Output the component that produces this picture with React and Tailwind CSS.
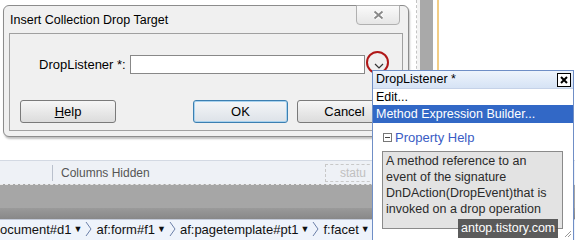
const crumbs = ["ocument#d1", "af:form#f1", "af:pagetemplate#pt1", "f:facet "];

const Chevron = () => (
  <svg width="8" height="16" viewBox="0 0 8 16" className="mx-[3px] shrink-0">
    <path d="M1 1 L6 8 L1 15" fill="none" stroke="#6b7fa8" strokeWidth="1" />
  </svg>
);

const App = () => {
  return (
    <div
      className="relative w-[575px] h-[240px] overflow-hidden bg-white text-[13px] text-black"
      style={{ fontFamily: '"Liberation Sans", Arial, sans-serif' }}
    >
      {/* editor behind the dialog */}
      <div className="flex flex-col h-full">
        <div className="flex h-[163px]">
          <div className="w-[417px] bg-white border-r border-dashed border-[#c4c4c4]" />
          <div className="w-[3px] bg-[#f4f4f4]" />
          <div className="w-[13px] bg-[#a9a9a9]" />
          <div className="w-[4px] bg-white" />
          <div className="w-[2px] bg-[#f2cd85]" />
          <div className="flex-1 bg-white" />
        </div>
        <div className="flex items-center h-[24px] bg-[#eef1f6] border-t border-[#d3d9e3]">
          <div className="w-[52px]" />
          <div className="w-px h-[16px] bg-[#b9c0cc]" />
          <span className="ml-[8px] text-[12px] text-[#555]">Columns Hidden</span>
          <div className="ml-auto mr-[200px] w-[50px] h-[18px] border border-dashed border-[#c8c8c8] text-[12px] text-[#c0c0c0] pl-[14px] leading-[16px]">
            statu
          </div>
        </div>
        <div className="h-[24px] bg-[#a6a6a6] border-t border-dashed border-[#e8e8e8]" />
        <div className="h-[11px] bg-gradient-to-b from-[#9a9a9a] to-[#888]" />
        <div className="flex-1 flex items-end pb-px bg-[#eef3fb] border-t border-[#c3cad8] text-[13px] text-[#111] whitespace-nowrap">
          {crumbs.map((c) => (
            <div key={c} className="flex items-center">
              <span>{c}</span>
              <span className="text-[9px] ml-[2px]">▼</span>
              <Chevron />
            </div>
          ))}
        </div>
      </div>

      {/* dialog */}
      <div className="absolute left-[3px] top-[5px] w-[406px] h-[132px] bg-[#f0f0f0] border border-[#8c8c8c] rounded-[6px] shadow-[1px_2px_2px_rgba(0,0,0,0.25)] flex flex-col">
        <div className="flex items-start h-[27px]">
          <span className="ml-[6px] mt-[5px] text-[12.5px]">Insert Collection Drop Target</span>
          <div className="ml-auto mr-[8px] -mt-px w-[44px] h-[20px] rounded-b-[4px] border border-[#b0b0b0] bg-gradient-to-b from-[#fafafa] to-[#e6e6e6] flex items-center justify-center">
            <svg width="11" height="10" viewBox="0 0 11 10">
              <path d="M1.5 1.5 L9.5 8.5 M9.5 1.5 L1.5 8.5" stroke="#fff" strokeWidth="4" />
              <path d="M1.5 1.5 L9.5 8.5 M9.5 1.5 L1.5 8.5" stroke="#8a8a8a" strokeWidth="2" />
            </svg>
          </div>
        </div>
        <div className="mx-[5px] h-[98px] border border-[#a0a0a0] bg-[#f0f0f0] flex flex-col">
          <div className="flex items-center mt-[21px] h-[19px]">
            <span className="ml-[29px] w-[91px]">DropListener *:</span>
            <div className="w-[235px] h-[19px] bg-white border border-[#888]" />
            <svg width="12" height="8" viewBox="0 0 12 8" className="ml-[8px] mt-[2px]">
              <path d="M2 2 L6 6 L10 2" fill="none" stroke="#333" strokeWidth="1.2" />
            </svg>
          </div>
          <div className="flex items-center mt-[26px]">
            <button className="ml-[10px] w-[96px] h-[23px] rounded-[3px] border border-[#7a7a7a] bg-gradient-to-b from-[#f6f6f6] to-[#dcdcdc]">
              <span className="underline">H</span>elp
            </button>
            <button className="ml-[77px] w-[95px] h-[23px] rounded-[3px] border border-[#3c7fb1] bg-gradient-to-b from-[#f4f6f8] to-[#dde2e8] shadow-[inset_0_0_0_1px_#a8d2ee]">
              OK
            </button>
            <button className="ml-[9px] w-[95px] h-[23px] rounded-[3px] border border-[#7a7a7a] bg-gradient-to-b from-[#f6f6f6] to-[#dcdcdc]">
              Cancel
            </button>
          </div>
        </div>
      </div>

      {/* red highlight circle */}
      <div className="absolute left-[366px] top-[51px] w-[23px] h-[23px] rounded-full border-2 border-[#b01818]" />

      {/* property popup */}
      <div className="absolute left-[372px] top-[70px] w-[202px] h-[172px] bg-white border border-[#6f8ec6] flex flex-col text-[12.5px]">
        <div className="flex items-center h-[17px] bg-gradient-to-b from-[#eef4fc] to-[#d6e3f5] pl-[3px]">
          <span>DropListener *</span>
          <div className="ml-auto mr-[2px] w-[14px] h-[14px] border border-black bg-white flex items-center justify-center">
            <svg width="8" height="8" viewBox="0 0 8 8">
              <path d="M1 1 L7 7 M7 1 L1 7" stroke="#000" strokeWidth="2" />
            </svg>
          </div>
        </div>
        <div className="h-[17px] border-t border-[#c5d2e8] pl-[3px] leading-[16px]">Edit...</div>
        <div className="h-[18px] bg-[#3268c6] text-white pl-[3px] leading-[18px]">Method Expression Builder...</div>
        <div className="flex items-center mt-[5px] ml-[10px] text-[#3a5cc4] text-[13px]">
          <div className="w-[9px] h-[9px] border border-[#777] flex items-center justify-center mr-[3px]">
            <div className="w-[5px] h-px bg-[#444]" />
          </div>
          <span>Property Help</span>
        </div>
        <div className="ml-[9px] mt-[3px] w-[181px] h-[78px] bg-[#e3e3e3] border border-[#8a8a8a] px-[3px] pt-[1px] text-[#2a2a2a] leading-[16px]">
          A method reference to an event of the signature DnDAction(DropEvent)that is invoked on a drop operation
        </div>
        <svg width="8" height="8" viewBox="0 0 8 8" className="absolute right-px bottom-[3px]">
          <path d="M7 1 L1 7 M7 4 L4 7" stroke="#999" strokeWidth="1" />
        </svg>
      </div>

      {/* watermark */}
      <div className="absolute left-[458px] top-[219px] h-[19px] px-[3px] bg-[#4a4a4a]/90 text-white text-[12.5px] leading-[19px]">
        antop.tistory.com
      </div>
    </div>
  );
};

export default App;
